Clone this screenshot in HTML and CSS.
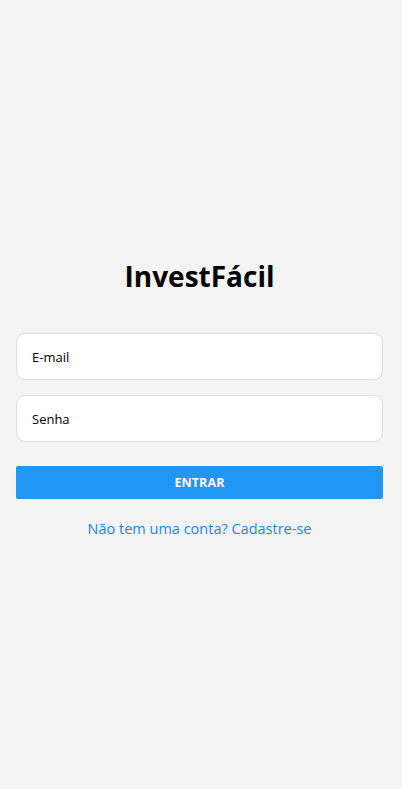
FILE: index.html
```html
<!DOCTYPE html>
<html lang="pt-BR">
<head>
<meta charset="utf-8">
<meta name="viewport" content="width=device-width, initial-scale=1">
<title>InvestFácil</title>
<link rel="stylesheet" href="styles.css">
</head>
<body>
<main class="screen">
  <h1 class="title">InvestFácil</h1>
  <form class="form">
    <input class="field" type="email" placeholder="E-mail">
    <input class="field" type="password" placeholder="Senha">
    <button class="btn" type="button">ENTRAR</button>
  </form>
  <a class="link" href="#">Não tem uma conta? Cadastre-se</a>
</main>
</body>
</html>
```
FILE: styles.css
```css
* { box-sizing: border-box; }
html, body { margin: 0; height: 100%; }
body {
  background: #f4f4f4;
  font-family: "Open Sans", "Noto Sans", sans-serif;
}
.screen {
  min-height: 100%;
  display: flex;
  flex-direction: column;
  justify-content: center;
  padding: 5px 19px 0 16px;
}
.title {
  margin: 0 0 37px;
  text-align: center;
  font-size: 28px;
  font-weight: 700;
  color: #000;
  line-height: 40px;
}
.form {
  display: flex;
  flex-direction: column;
  gap: 15px;
}
.field {
  height: 47px;
  border: 1px solid #dddddd;
  border-radius: 9px;
  background: #fff;
  padding: 0 15px;
  font-family: inherit;
  font-size: 13px;
  color: #000;
  outline: none;
}
.field::placeholder { color: #000; }
.btn {
  margin-top: 9px;
  height: 33px;
  border: none;
  border-radius: 2px;
  background: #2196f3;
  color: #fff;
  font-family: inherit;
  font-weight: 700;
  font-size: 12.5px;
  letter-spacing: 0.1px;
}
.link {
  margin-top: 20px;
  text-align: center;
  color: #1f84f0;
  font-size: 14.5px;
  text-decoration: none;
}
```
